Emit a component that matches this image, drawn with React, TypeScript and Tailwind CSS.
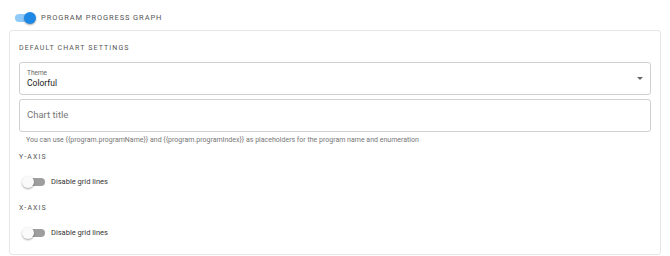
function Toggle({ on }: { on: boolean }) {
  return (
    <div className="relative w-[20px] h-[12px] flex items-center">
      <div className={`w-full h-[8px] rounded-full ${on ? 'bg-[#90caf9]' : 'bg-[#9e9e9e]'}`} />
      <div
        className={`absolute top-0 w-[12px] h-[12px] rounded-full shadow-[0_1px_2px_rgba(0,0,0,0.35)] ${
          on ? 'left-[9px] bg-[#1e88e5]' : 'left-[-3px] bg-[#fafafa]'
        }`}
      />
    </div>
  );
}

function AxisSection({ title, first }: { title: string; first?: boolean }) {
  return (
    <div className={first ? 'mt-[7px]' : 'mt-[14px]'}>
      <p className="text-[7px] leading-[10px] tracking-[0.16em] text-[#555] uppercase">{title}</p>
      <div className="flex items-center gap-[6px] pl-[6px] mt-[13px] h-[14px]">
        <Toggle on={false} />
        <span className="text-[7.5px] text-[#333]">Disable grid lines</span>
      </div>
    </div>
  );
}

export default function App() {
  return (
    <div className="w-[670px] h-[256px] bg-white font-['Roboto',sans-serif] overflow-hidden">
      <div className="flex items-center gap-[6px] pl-[15px] pt-[11px] h-[24px]">
        <Toggle on={true} />
        <span className="text-[7.5px] tracking-[0.12em] text-[#555] uppercase">Program progress graph</span>
      </div>

      <div className="mx-[9px] mt-[6px] border border-[#e6e6e6] rounded-[3px] px-[9px] pt-[12px] h-[225px]">
        <p className="text-[7px] leading-[10px] tracking-[0.16em] text-[#555] uppercase">Default chart settings</p>

        <div className="mt-[9px] h-[33px] border border-[#d0d0d0] rounded-[3px] px-[7px] flex items-center justify-between">
          <div className="flex flex-col">
            <span className="text-[6.5px] leading-[8px] text-[#666]">Theme</span>
            <span className="text-[8.5px] leading-[12px] text-[#222]">Colorful</span>
          </div>
          <div className="w-0 h-0 border-l-[3.5px] border-r-[3.5px] border-t-[3.5px] border-l-transparent border-r-transparent border-t-[#666] mr-[0px]" />
        </div>

        <div className="mt-[4px] h-[33px] border border-[#d0d0d0] rounded-[3px] px-[7px] flex items-center">
          <span className="text-[9.5px] text-[#777]">Chart title</span>
        </div>

        <p className="text-[7px] leading-[10px] text-[#777] pl-[7px] mt-[3px]">
          You can use {'{{program.programName}}'} and {'{{program.programIndex}}'} as placeholders for the program name and enumeration
        </p>

        <AxisSection title="Y-Axis" first />
        <AxisSection title="X-Axis" />
      </div>
    </div>
  );
}
